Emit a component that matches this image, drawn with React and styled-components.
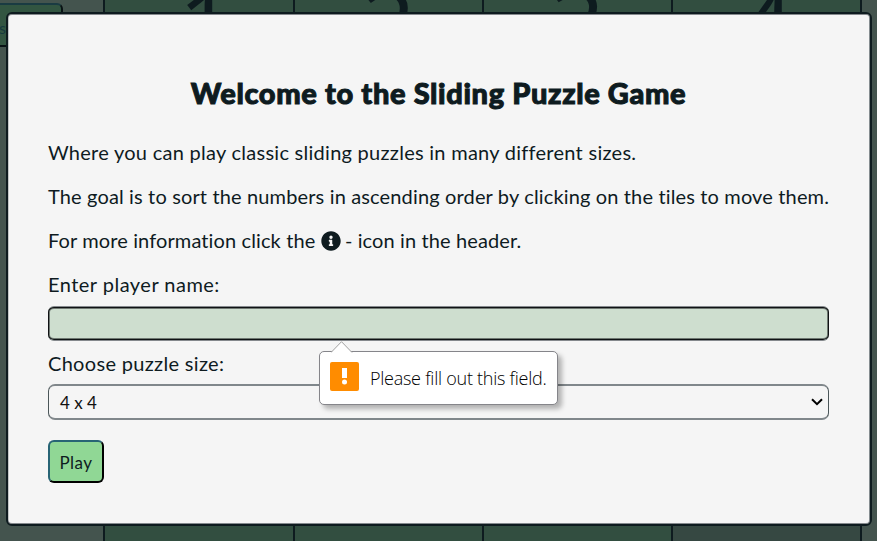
import React from "react";
import styled, { createGlobalStyle } from "styled-components";
import { FaInfoCircle } from "react-icons/fa";

const Global = createGlobalStyle`
  * { box-sizing: border-box; }
  body { margin: 0; overflow: hidden; background: #44544e; font-family: Lato, sans-serif; color: #0e1b1f; }
`;

const Page = styled.main`
  display: flex;
  align-items: flex-start;
  height: 541px;
  overflow: hidden;
`;

const Sidebar = styled.aside`
  display: flex;
  justify-content: flex-end;
  flex: 0 0 103px;
  min-width: 0;
  padding: 3px 40px 0 0;
`;

const HeaderButton = styled.button`
  flex: 0 0 123px;
  height: 44px;
  padding: 4px 55px 0 0;
  text-align: right;
  border: 2px solid;
  border-color: #1a3b42 #081214 #081214 #1a3b42;
  border-radius: 6px;
  background: #325541;
  color: #163a3e;
  font: 16px Lato, sans-serif;
`;

const Board = styled.div`
  flex: none;
  display: grid;
  grid-template-columns: 190px 189px 189px 189px;
  grid-auto-rows: 189px;
  margin-top: -80px;
  padding: 0 1px;
  background: #0e1b1f;
`;

const Tile = styled.div`
  display: flex;
  align-items: center;
  justify-content: center;
  padding: 14px 0 0 ${(p) => p.$shift || "0"};
  border: 1px solid #0e1b1f;
  background: ${(p) => (p.$empty ? "#364842" : "#324e40")};
  font: 500 96px/1 "Open Sans", sans-serif;
`;

const Overlay = styled.div`
  position: fixed;
  inset: 0;
  display: flex;
  justify-content: center;
  padding: 12px 5px 15px 6px;
`;

const Dialog = styled.section`
  flex: 1;
  padding: 61px 41px 0 40px;
  border: 2px solid #0e1b1f;
  border-radius: 6px;
  background: #f5f5f5;
  box-shadow: inset 0 1px #85898d, inset 0 -1px #85898d, inset 1px 0 #c3c6c7, inset -1px 0 #858d90;
`;

const Title = styled.h1`
  margin: 0 0 29px;
  height: 36px;
  line-height: 36px;
  text-align: center;
  white-space: nowrap;
  font-size: 29px;
  font-weight: 900;
  letter-spacing: 0.63px;
  -webkit-text-stroke: 1px #0e1b1f;
`;

const Copy = styled.p`
  margin: 0 0 20px;
  line-height: 24px;
  white-space: nowrap;
  font-size: 20px;
  letter-spacing: ${(p) => p.$spacing};
`;

const InfoIcon = styled(FaInfoCircle)`
  width: 20px;
  height: 20px;
  margin-right: -1px;
  vertical-align: -3px;
`;

const Form = styled.form`
  display: flex;
  flex-direction: column;
  align-items: flex-start;
`;

const Field = styled.div`
  position: relative;
  display: grid;
  gap: 9px;
  width: 100%;
  margin-bottom: ${(p) => p.$gap};
`;

const Label = styled.label`
  line-height: 24px;
  font-size: 20px;
  letter-spacing: ${(p) => p.$spacing};
`;

const NameInput = styled.input`
  width: 781px;
  height: 35px;
  margin-top: 1px;
  border: solid #85898d;
  border-width: 1px 0;
  border-radius: 6px;
  background: #cedecf;
  box-shadow: inset 0 0 0 1px #101214, inset 0 0 0 2px #6f7872;
`;

const SizeSelect = styled.div`
  display: flex;
  align-items: center;
  justify-content: space-between;
  width: 781px;
  height: 36px;
  padding: 0 5px 0 11px;
  border: solid #80878b;
  border-width: 2px 1px;
  border-left-color: #4b5659;
  border-right-color: #4b5659;
  border-radius: 7px;
  color: #111;
  font-size: 17px;
`;

const PlayButton = styled.button`
  width: 56px;
  height: 43px;
  padding: 2px 0 0;
  border: 2px solid;
  border-color: #286475 #000 #000 #286475;
  border-radius: 6px;
  background: #90d795;
  color: #0e1b1f;
  font: 17px Lato, sans-serif;
  letter-spacing: 0.4px;
`;

const Bubble = styled.div`
  position: absolute;
  left: 271px;
  top: 79px;
  z-index: 1;
  width: 239px;
  height: 54px;
  display: flex;
  align-items: center;
  padding: 0 10px;
  gap: 11px;
  border: 1px solid #85858a;
  border-radius: 5px;
  background: #fff;
  color: #000;
  font: 300 18px "Open Sans", sans-serif;
  letter-spacing: -0.25px;
  white-space: nowrap;
  box-shadow: 4px 4px 5px rgba(0, 0, 0, 0.28);
`;

const Pointer = styled.svg`
  position: absolute;
  left: 11px;
  top: -11px;
`;

const WarningIcon = styled.svg`
  flex: none;
  margin-top: -4px;
`;

const tiles = ["1", "2", "3", "4", ...Array(12).fill("")];

const App = () => (
  <>
    <Global />
    <Page>
      <Sidebar>
        <HeaderButton>es</HeaderButton>
      </Sidebar>
      <Board>
        {tiles.map((label, i) => (
          <Tile key={i} $empty={i === 15} $shift={label === "1" ? "14px" : "0"}>{label}</Tile>
        ))}
      </Board>
    </Page>
    <Overlay>
      <Dialog>
        <Title>Welcome to the Sliding Puzzle Game</Title>
        <Copy $spacing="0.27px">Where you can play classic sliding puzzles in many different sizes.</Copy>
        <Copy $spacing="0.145px">The goal is to sort the numbers in ascending order by clicking on the tiles to move them.</Copy>
        <Copy $spacing="0.12px">For more information click the <InfoIcon /> - icon in the header.</Copy>
        <Form>
          <Field $gap="10px">
            <Label $spacing="0.48px">Enter player name:</Label>
            <NameInput />
            <Bubble>
              <Pointer width="22" height="12">
                <path d="M0 11.5 10.5 .7 21 11.5" fill="#fff" stroke="#a0a0a0" />
              </Pointer>
              <WarningIcon width="29" height="29">
                <rect width="29" height="29" rx="2" fill="#ff8c00" />
                <path d="M12 6h5v10h-5z" fill="#fff" />
                <circle cx="14.5" cy="20" r="2.5" fill="#fff" />
              </WarningIcon>
              Please fill out this field.
            </Bubble>
          </Field>
          <Field $gap="20px">
            <Label $spacing="0.32px">Choose puzzle size:</Label>
            <SizeSelect>
              4 x 4
              <svg width="12" height="8">
                <path d="M1 1.2 6 6.2 11 1.2" fill="none" stroke="#000" strokeWidth="2" />
              </svg>
            </SizeSelect>
          </Field>
          <PlayButton type="button">Play</PlayButton>
        </Form>
      </Dialog>
    </Overlay>
  </>
);

export default App;
